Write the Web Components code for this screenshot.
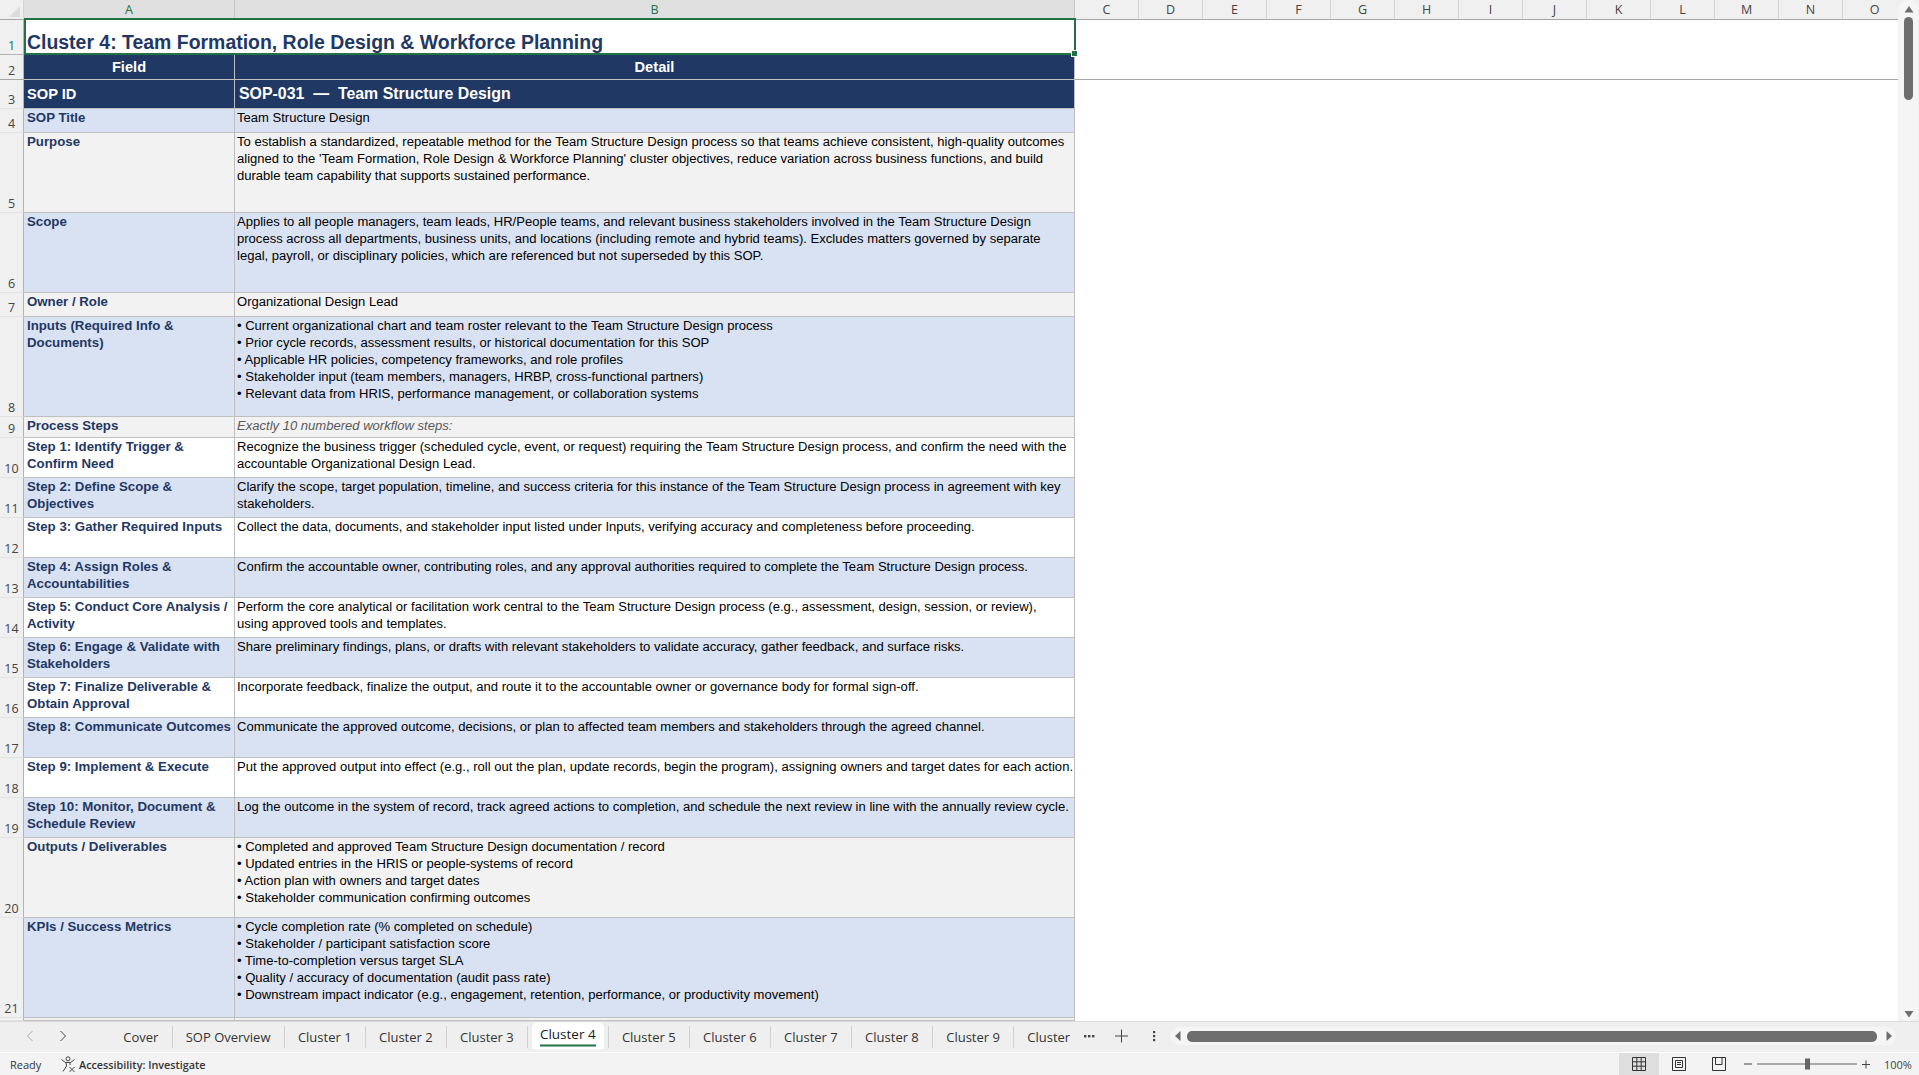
<!DOCTYPE html>
<html lang="en"><head><meta charset="utf-8"><title>Cluster 4</title>
<style>
html,body{margin:0;padding:0;height:100%;overflow:hidden;background:#fff}
body{font-family:"Liberation Sans",Arial,sans-serif}
</style></head><body>
<x-excel>
  <x-colhead slot="sheet"></x-colhead>
  <x-row slot="sheet" n="1" h="35" tone="title" selected><span slot="a">Cluster 4: Team Formation, Role Design &amp; Workforce Planning</span></x-row>
  <x-row slot="sheet" n="2" h="25" tone="head" frozen><span slot="a">Field</span>Detail</x-row>
  <x-row slot="sheet" n="3" h="29" tone="id"><span slot="a">SOP ID</span>SOP-031&nbsp; —&nbsp; Team Structure Design</x-row>
  <x-row slot="sheet" n="4" h="24" tone="band"><span slot="a">SOP Title</span>Team Structure Design</x-row>
  <x-row slot="sheet" n="5" h="80" tone="grey"><span slot="a">Purpose</span>To establish a standardized, repeatable method for the Team Structure Design process so that teams achieve consistent, high-quality outcomes<br>aligned to the 'Team Formation, Role Design &amp; Workforce Planning' cluster objectives, reduce variation across business functions, and build<br>durable team capability that supports sustained performance.</x-row>
  <x-row slot="sheet" n="6" h="80" tone="band"><span slot="a">Scope</span>Applies to all people managers, team leads, HR/People teams, and relevant business stakeholders involved in the Team Structure Design<br>process across all departments, business units, and locations (including remote and hybrid teams). Excludes matters governed by separate<br>legal, payroll, or disciplinary policies, which are referenced but not superseded by this SOP.</x-row>
  <x-row slot="sheet" n="7" h="24" tone="grey"><span slot="a">Owner / Role</span>Organizational Design Lead</x-row>
  <x-row slot="sheet" n="8" h="100" tone="band"><span slot="a">Inputs (Required Info &amp;<br>Documents)</span>• Current organizational chart and team roster relevant to the Team Structure Design process<br>• Prior cycle records, assessment results, or historical documentation for this SOP<br>• Applicable HR policies, competency frameworks, and role profiles<br>• Stakeholder input (team members, managers, HRBP, cross-functional partners)<br>• Relevant data from HRIS, performance management, or collaboration systems</x-row>
  <x-row slot="sheet" n="9" h="21" tone="grey"><span slot="a">Process Steps</span><i style="color:#595959">Exactly 10 numbered workflow steps:</i></x-row>
  <x-row slot="sheet" n="10" h="40" tone="white"><span slot="a">Step 1: Identify Trigger &amp;<br>Confirm Need</span>Recognize the business trigger (scheduled cycle, event, or request) requiring the Team Structure Design process, and confirm the need with the<br>accountable Organizational Design Lead.</x-row>
  <x-row slot="sheet" n="11" h="40" tone="band"><span slot="a">Step 2: Define Scope &amp;<br>Objectives</span>Clarify the scope, target population, timeline, and success criteria for this instance of the Team Structure Design process in agreement with key<br>stakeholders.</x-row>
  <x-row slot="sheet" n="12" h="40" tone="white"><span slot="a">Step 3: Gather Required Inputs</span>Collect the data, documents, and stakeholder input listed under Inputs, verifying accuracy and completeness before proceeding.</x-row>
  <x-row slot="sheet" n="13" h="40" tone="band"><span slot="a">Step 4: Assign Roles &amp;<br>Accountabilities</span>Confirm the accountable owner, contributing roles, and any approval authorities required to complete the Team Structure Design process.</x-row>
  <x-row slot="sheet" n="14" h="40" tone="white"><span slot="a">Step 5: Conduct Core Analysis /<br>Activity</span>Perform the core analytical or facilitation work central to the Team Structure Design process (e.g., assessment, design, session, or review),<br>using approved tools and templates.</x-row>
  <x-row slot="sheet" n="15" h="40" tone="band"><span slot="a">Step 6: Engage &amp; Validate with<br>Stakeholders</span>Share preliminary findings, plans, or drafts with relevant stakeholders to validate accuracy, gather feedback, and surface risks.</x-row>
  <x-row slot="sheet" n="16" h="40" tone="white"><span slot="a">Step 7: Finalize Deliverable &amp;<br>Obtain Approval</span>Incorporate feedback, finalize the output, and route it to the accountable owner or governance body for formal sign-off.</x-row>
  <x-row slot="sheet" n="17" h="40" tone="band"><span slot="a">Step 8: Communicate Outcomes</span>Communicate the approved outcome, decisions, or plan to affected team members and stakeholders through the agreed channel.</x-row>
  <x-row slot="sheet" n="18" h="40" tone="white"><span slot="a">Step 9: Implement &amp; Execute</span>Put the approved output into effect (e.g., roll out the plan, update records, begin the program), assigning owners and target dates for each action.</x-row>
  <x-row slot="sheet" n="19" h="40" tone="band"><span slot="a">Step 10: Monitor, Document &amp;<br>Schedule Review</span>Log the outcome in the system of record, track agreed actions to completion, and schedule the next review in line with the annually review cycle.</x-row>
  <x-row slot="sheet" n="20" h="80" tone="grey"><span slot="a">Outputs / Deliverables</span>• Completed and approved Team Structure Design documentation / record<br>• Updated entries in the HRIS or people-systems of record<br>• Action plan with owners and target dates<br>• Stakeholder communication confirming outcomes</x-row>
  <x-row slot="sheet" n="21" h="100" tone="band"><span slot="a">KPIs / Success Metrics</span>• Cycle completion rate (% completed on schedule)<br>• Stakeholder / participant satisfaction score<br>• Time-to-completion versus target SLA<br>• Quality / accuracy of documentation (audit pass rate)<br>• Downstream impact indicator (e.g., engagement, retention, performance, or productivity movement)</x-row>
  <x-row slot="sheet" n="" h="3" tone="grey" last></x-row>
  <x-vscroll slot="vscroll"></x-vscroll>
  <x-tabbar slot="tabs"></x-tabbar>
  <x-status slot="status"></x-status>
</x-excel>
<script>
function mk(name, html, extra){
  const C = class extends HTMLElement{
    constructor(){super();const r=this.attachShadow({mode:'open'});r.innerHTML=html;}
    connectedCallback(){if(extra)extra(this,this.shadowRoot);}
  };
  customElements.define(name,C);
}
mk('x-excel',`<style>
:host{display:grid;grid-template-rows:1021px 31px 1fr;width:1919px;height:1075px;overflow:hidden;background:#fff}
.top{display:flex;min-height:0;overflow:hidden}
.sheet{flex:1;display:flex;flex-direction:column;min-width:0;overflow:hidden}
</style>
<div class="top"><div class="sheet"><slot name="sheet"></slot></div><slot name="vscroll"></slot></div>
<slot name="tabs"></slot><slot name="status"></slot>`);

mk('x-colhead',`<style>
:host{display:flex;flex:none;height:20px;box-sizing:border-box;background:#f0f0f0;font:12.5px "Open Sans","Noto Sans",sans-serif;color:#444;border-bottom:1px solid #a6a6a6;overflow:hidden}
.c{flex:none;display:flex;align-items:center;justify-content:center;box-sizing:border-box;border-right:1px solid #d4d4d4;height:19px;width:64px}
.corner{width:24px;background:#f0f0f0;position:relative;border-right:1px solid #d4d4d4}
.corner svg{position:absolute;right:3px;bottom:2px}
.sel{background:#e0e0e0;color:#217346;border-right-color:#c6c6c6}
</style><div class="c corner"><svg width="11" height="11"><path d="M11 0V11H0Z" fill="#dcdcdc"/></svg></div>
<div class="c sel" style="width:211px">A</div><div class="c sel" style="width:840px;">B</div>
<div class="c">C</div><div class="c">D</div><div class="c">E</div><div class="c">F</div><div class="c">G</div><div class="c">H</div><div class="c">I</div><div class="c">J</div><div class="c">K</div><div class="c">L</div><div class="c">M</div><div class="c">N</div><div class="c">O</div>`);

mk('x-row',`<style>
:host{display:grid;grid-template-columns:24px 211px 840px 1fr;flex:none;position:relative;height:var(--h);font:13.05px/17px "Liberation Sans",Arial,sans-serif;color:#000;white-space:nowrap}
.n,.a,.b{box-sizing:border-box;overflow:hidden}
.n{background:#f0f0f0;font:12.5px/16px "Open Sans","Noto Sans",sans-serif;color:#444;display:flex;align-items:flex-end;justify-content:center;border-bottom:1px solid #e3e3e3;border-right:1px solid #b4b4b4}
.a,.b{border-bottom:1px solid #bfbfbf;border-right:1px solid #bfbfbf;background:var(--bg,#fff)}
.a{padding-left:3px;font-weight:700;font-size:13.25px;color:#1F3864}
.b{padding-left:2px}
.f{min-width:0}
:host([tone=band]){--bg:#D9E2F3}
:host([tone=grey]){--bg:#F2F2F2}
:host([tone=white]){--bg:#fff}
:host([tone=head]) .a,:host([tone=head]) .b{background:#1F3864;color:#fff;font:700 14.67px/24px "Liberation Sans",Arial,sans-serif;text-align:center;padding:0}
:host([tone=id]) .a,:host([tone=id]) .b{background:#1F3864;color:#fff;font:700 14.67px/28px "Liberation Sans",Arial,sans-serif}
:host([tone=id]) .b{padding-left:4px;font-size:15.9px}
:host([tone=title]) .a{font:700 19.45px/22px "Liberation Sans",Arial,sans-serif;display:flex;align-items:flex-end;padding-left:3px;padding-bottom:2px;overflow:visible;border-right:none;border-bottom:none;position:relative;z-index:1;background:transparent}
:host([tone=title]) .b{border:none}
:host([tone=title]) .n{color:#217346;border-bottom-color:#b4b4b4}
:host([frozen]) .f{border-bottom:1px solid #a6a6a6}
:host([frozen]) .n{border-bottom-color:#a6a6a6}
.sel{display:none;position:absolute;left:24px;top:-2px;width:1052px;height:37px;box-sizing:border-box;border:2px solid #217346;pointer-events:none;z-index:2}
:host([selected]) .sel{display:block}
.sel i{position:absolute;right:-3px;bottom:-3px;width:5px;height:5px;background:#217346;outline:1px solid #fff}
</style><div class="n"></div><div class="a"><slot name="a"></slot></div><div class="b"><slot></slot></div><div class="f"></div><div class="sel"><i></i></div>`,
(el,r)=>{el.style.setProperty('--h',el.getAttribute('h')+'px');r.querySelector('.n').textContent=el.getAttribute('n')||'';});

mk('x-vscroll',`<style>
:host{display:flex;flex-direction:column;align-items:center;width:21px;flex:none;background:#f0f0f0;box-sizing:border-box;position:relative}
.p{flex:1;width:19px;background:#f5f5f5;border-radius:8px;display:flex;flex-direction:column;align-items:center;padding:5px 0 3px;box-sizing:border-box}
.thumb{width:9px;height:83px;border-radius:5px;background:#6e6e6e;margin-top:4px}
.sp{flex:1}
</style><div class="p"><svg width="10" height="8"><path d="M5 1 9.5 7.5H.5Z" fill="#6e6e6e"/></svg><div class="thumb"></div><div class="sp"></div><svg width="10" height="8"><path d="M5 7.5 9.5 1H.5Z" fill="#6e6e6e"/></svg></div>`);

mk('x-tab',`<style>
:host{display:flex;flex:none;height:31px;align-items:center;box-sizing:border-box;padding-bottom:2px;font:13px "Open Sans","Noto Sans",sans-serif;color:#333;white-space:nowrap}
.t{padding:0 13.2px}
.s{width:1px;height:22px;background:#d0d0d0}
:host([active]) .t{background:#fff;border-radius:5px 5px 3px 3px;height:27px;box-sizing:border-box;padding:0 8px;margin:0 4px;display:flex;flex-direction:column;align-items:center;color:#1a1a1a;line-height:22px;font-size:13.5px;transform:translateY(-0.5px)}
:host([active]) .t span{border-bottom:2px solid #217346;height:22px}
</style><div class="t"><span><slot></slot></span></div><div class="s"></div>`);

mk('x-tabbar',`<style>
:host{display:flex;align-items:flex-start;height:31px;background:#efefef;border-top:1px solid #dcdcdc;box-sizing:border-box;overflow:hidden;position:relative}
.nav{display:flex;align-items:center;width:110px;height:30px;flex:none;padding-left:26px;gap:25px;box-sizing:border-box;padding-bottom:2px}
.tabs{display:flex;width:960px;flex:none;overflow:hidden;align-items:center}
.ctl{display:flex;align-items:center;flex:none;height:30px;padding-bottom:2px;box-sizing:border-box}
.track{width:726px;height:18px;background:#f5f5f5;border-radius:9px;display:flex;align-items:center;flex:none;box-sizing:border-box;padding:0 3px 0 4px}
.thumb{margin:0 9px 0 6px;flex:none;width:690px;height:11px;border-radius:5px;background:#6e6e6e}
</style>
<div class="nav"><svg width="8" height="12"><path d="M6.5 1 1.5 6l5 5" fill="none" stroke="#a8a8a8"/></svg><svg width="8" height="12"><path d="M1.5 1l5 5-5 5" fill="none" stroke="#444"/></svg></div>
<div class="tabs">
<x-tab>Cover</x-tab><x-tab>SOP Overview</x-tab><x-tab>Cluster 1</x-tab><x-tab>Cluster 2</x-tab><x-tab>Cluster 3</x-tab><x-tab active>Cluster 4</x-tab><x-tab>Cluster 5</x-tab><x-tab>Cluster 6</x-tab><x-tab>Cluster 7</x-tab><x-tab>Cluster 8</x-tab><x-tab>Cluster 9</x-tab><x-tab>Cluster 10</x-tab>
</div>
<div class="ctl"><svg width="100" height="16" viewBox="0 0 100 16" style="flex:none"><g fill="#444"><rect x="14" y="7" width="2.4" height="2.4"/><rect x="18" y="7" width="2.4" height="2.4"/><rect x="22" y="7" width="2.4" height="2.4"/><rect x="45" y="7.5" width="13" height="1"/><rect x="51" y="1.5" width="1" height="13"/><rect x="83" y="3" width="2.2" height="2.2"/><rect x="83" y="7" width="2.2" height="2.2"/><rect x="83" y="11" width="2.2" height="2.2"/></g></svg>
<div class="track"><svg width="7" height="10" style="flex:none"><path d="M6.5 0V10L1 5Z" fill="#6e6e6e"/></svg><div class="thumb"></div><svg width="7" height="10" style="flex:none"><path d="M.5 0V10L6 5Z" fill="#6e6e6e"/></svg></div></div>`);

mk('x-status',`<style>
:host{display:flex;align-items:center;height:23px;background:#f3f3f3;border-top:1px solid #fff;box-sizing:border-box;font:11px "Open Sans","Noto Sans",sans-serif;color:#333;white-space:nowrap;overflow:hidden}
.rdy{margin-left:10px;width:50px}
.acc{display:flex;align-items:center;gap:1px;font-weight:600;color:#333;font-size:10.8px}
.sp{flex:1}
.v{width:40px;height:22px;display:flex;align-items:center;justify-content:center;flex:none}
.v.on{background:#dedede}
.z{display:flex;align-items:center;flex:none;margin-left:5px}
.pc{width:27px;margin:0 8px 0 13px;flex:none;color:#444}
</style>
<span class="rdy">Ready</span>
<span class="acc"><svg width="18" height="17" viewBox="0 0 18 17" fill="none" stroke="#444" stroke-width="1"><circle cx="8" cy="2.8" r="2"/><path d="M1.5 3.5 5.5 6.5H10.5L14.5 3.5M6 6.5 6.5 10 3 15.5M10 6.5V9"/><path d="M9.5 11l5 5M14.5 11l-5 5"/></svg>Accessibility: Investigate</span>
<span class="sp"></span>
<div class="v on"><svg width="14" height="14"><path d="M.5.5h13v13H.5zM4.8.5v13M9.2.5v13M.5 4.8h13M.5 9.2h13" fill="none" stroke="#333"/></svg></div>
<div class="v"><svg width="14" height="14"><path d="M.5.5h13v13H.5z" fill="none" stroke="#333"/><path d="M3.5 3.5h7v7h-7zM5 5.5h4M5 7.5h4" fill="none" stroke="#333"/></svg></div>
<div class="v"><svg width="14" height="14"><path d="M.5.5h13v13H.5zM3.5.5v7h6.5V.5" fill="none" stroke="#333"/></svg></div>
<div class="z"><svg width="114" height="14" viewBox="0 0 114 14"><g fill="#444"><rect x="0" y="6.5" width="8" height="1"/><rect x="13" y="6.5" width="100" height="1" fill="#666"/><rect x="61" y="1.5" width="5" height="11" fill="#666"/></g></svg></div>
<svg width="9" height="9" style="margin-left:4px;flex:none"><path d="M0 4.5h8M4 .5v8" stroke="#444" fill="none"/></svg>
<span class="pc">100%</span>`);
</script>
</body></html>
